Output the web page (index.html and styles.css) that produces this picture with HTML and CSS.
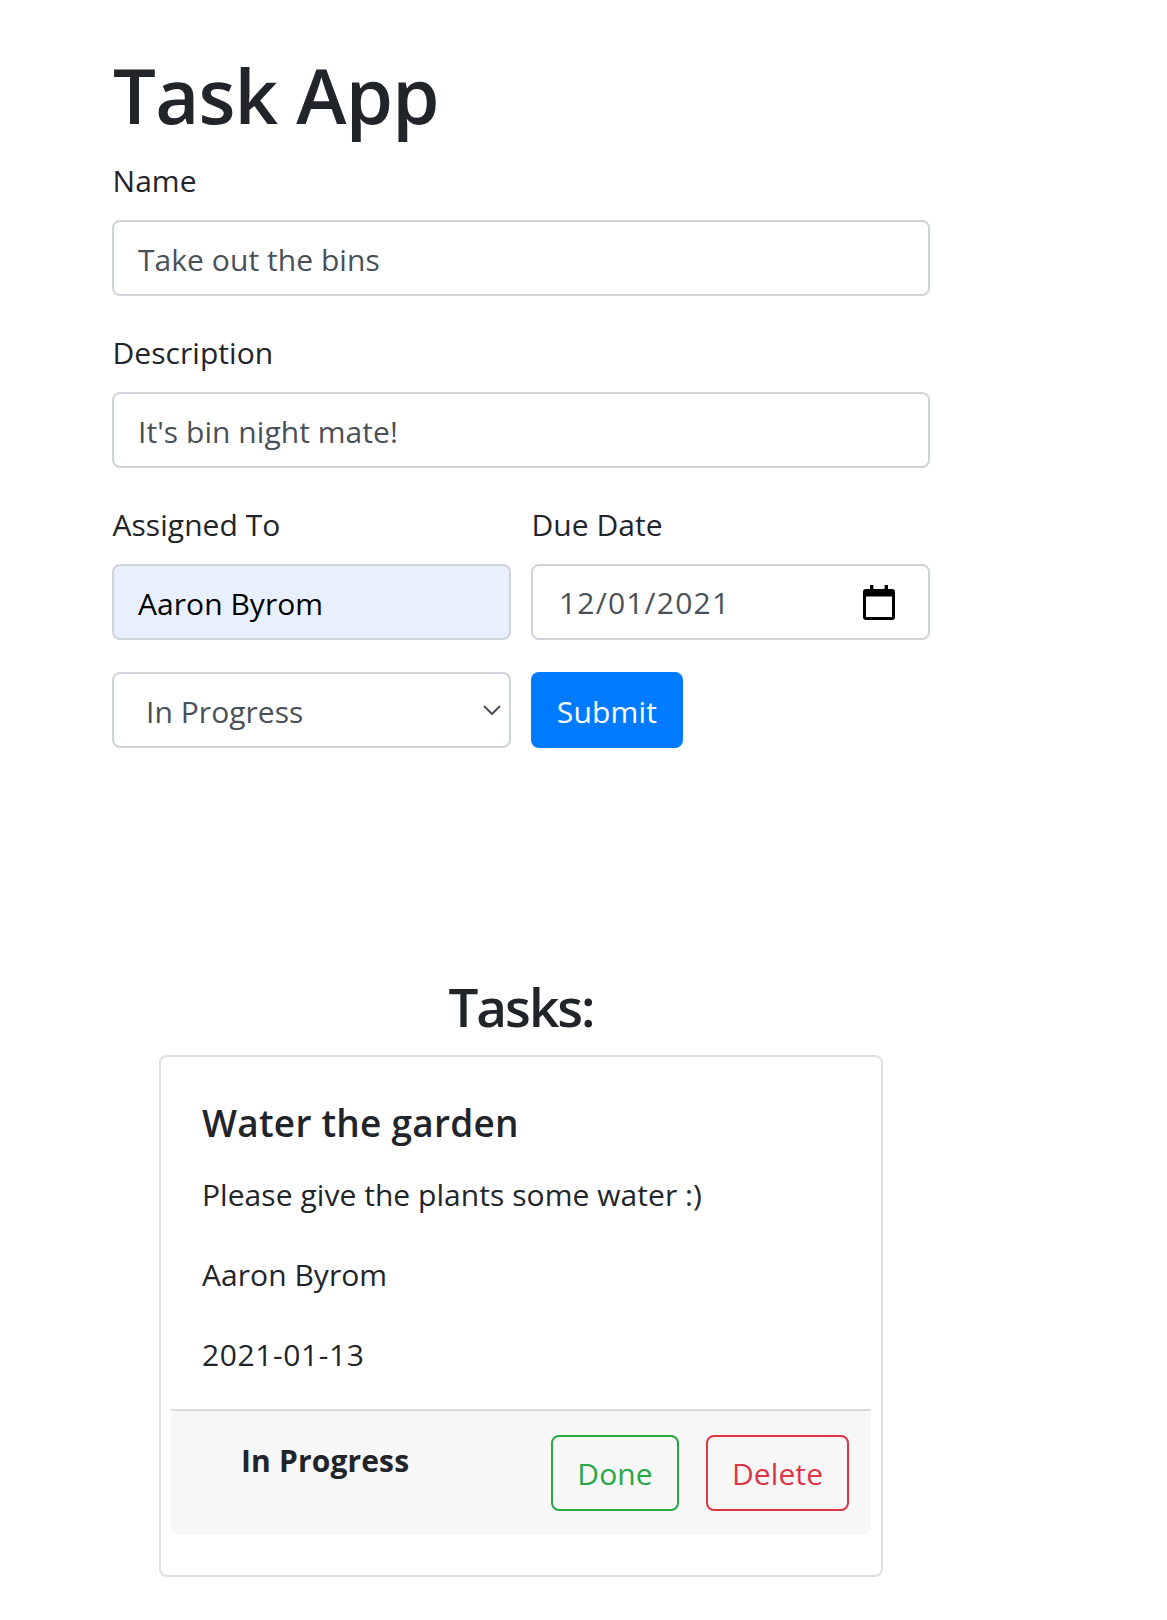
FILE: index.html
```html
<!DOCTYPE html>
<html lang="en">
<head>
<meta charset="utf-8">
<title>Task App</title>
<link rel="stylesheet" href="styles.css">
</head>
<body>
<main class="page">
  <h1 class="title">Task App</h1>
  <form class="task-form">
    <div class="group">
      <label class="label" for="name">Name</label>
      <input class="control" id="name" type="text" value="Take out the bins">
    </div>
    <div class="group">
      <label class="label" for="desc">Description</label>
      <input class="control" id="desc" type="text" value="It's bin night mate!">
    </div>
    <div class="row">
      <div class="col">
        <label class="label" for="who">Assigned To</label>
        <input class="control control-filled" id="who" type="text" value="Aaron Byrom">
      </div>
      <div class="col">
        <label class="label" for="due">Due Date</label>
        <div class="control date-field">
          <input class="date-input" id="due" type="text" value="12/01/2021">
          <svg class="calendar" viewBox="0 0 32 35" aria-hidden="true">
            <path d="M7 0h3.4v4H21.6V0H25v4h4a3 3 0 0 1 3 3v25a3 3 0 0 1-3 3H3a3 3 0 0 1-3-3V7a3 3 0 0 1 3-3h4zM3 11.500V32h26V11.500z"/>
          </svg>
        </div>
      </div>
    </div>
    <div class="row row-last">
      <div class="col select-wrap">
        <select class="control select">
          <option>In Progress</option>
          <option>Done</option>
        </select>
        <svg class="chevron" viewBox="0 0 18 10" aria-hidden="true">
          <path d="M1 1l8 8 8-8"/>
        </svg>
      </div>
      <div class="col">
        <button class="submit" type="button">Submit</button>
      </div>
    </div>
  </form>

  <section class="tasks">
    <h3 class="tasks-title">Tasks:</h3>
    <article class="card">
      <div class="card-body">
        <h5 class="card-title">Water the garden</h5>
        <p class="card-text">Please give the plants some water :)</p>
        <p class="card-text">Aaron Byrom</p>
        <p class="card-text card-date">2021-01-13</p>
      </div>
      <div class="card-footer">
        <strong class="status">In Progress</strong>
        <button class="btn btn-done" type="button">Done</button>
        <button class="btn btn-delete" type="button">Delete</button>
      </div>
    </article>
  </section>
</main>
</body>
</html>
```
FILE: styles.css
```css
* { box-sizing: border-box; }

html, body { margin: 0; background: #fff; }

body {
  font-family: "Open Sans", "Noto Sans", sans-serif;
  font-size: 30px;
  letter-spacing: 0.05px;
  line-height: 48px;
  color: #212529;
}

.page {
  width: 930px;
  padding: 47px 0 0 112px;
}

.title {
  margin: 0 0 13px;
  padding-left: 1px;
  font-size: 76px;
  font-weight: 600;
  line-height: 96px;
  letter-spacing: -0.8px;
}

.group { margin-bottom: 32px; }

.label {
  display: block;
  height: 48px;
  margin-bottom: 16px;
  padding: 1px 0 0 0.5px;
}

.control {
  display: block;
  width: 100%;
  height: 76px;
  padding: 3px 24px 0;
  border: 2px solid #ced4da;
  border-radius: 8px;
  background: #fff;
  color: #495057;
  font: inherit;
  letter-spacing: inherit;
}

.control-filled {
  background: #e8f0fe;
  color: #000;
}

.row {
  display: flex;
  gap: 20px;
  margin-bottom: 32px;
}

.row-last { margin-bottom: 0; }

.col {
  flex: 1 1 0;
  min-width: 0;
}

.date-field {
  display: flex;
  align-items: center;
  padding: 0 33px 0 26px;
}

.date-input {
  flex: 1;
  min-width: 0;
  padding: 2px 0 0;
  border: 0;
  background: none;
  color: #495057;
  font: inherit;
  letter-spacing: 1.2px;
}

.calendar {
  flex: none;
  width: 32px;
  height: 35px;
  fill: #000;
}

.select-wrap { position: relative; }

.select {
  padding-top: 4px;
  padding-left: 32px;
  appearance: none;
}

.chevron {
  position: absolute;
  top: 33px;
  right: 10px;
  width: 18px;
  height: 10px;
  fill: none;
  stroke: #495057;
  stroke-width: 2;
}

.submit {
  display: block;
  width: 152px;
  height: 76px;
  padding: 3px 0 0;
  border: 0;
  border-radius: 8px;
  background: #007bff;
  color: #fff;
  font: inherit;
  letter-spacing: 0.2px;
}

.tasks { margin-top: 225px; }

.tasks-title {
  margin: 1px 0 15px;
  font-size: 53px;
  font-weight: 600;
  line-height: 67px;
  letter-spacing: -2px;
  text-align: center;
}

.card {
  height: 522px;
  margin: 0 47px;
  padding: 10px;
  border: 2px solid #dedede;
  border-radius: 8px;
}

.card-body {
  height: 342px;
  padding: 32px 31px 0;
}

.card-title {
  margin: 0 0 24px;
  font-size: 37px;
  font-weight: 600;
  line-height: 48px;
  letter-spacing: 0.25px;
}

.card-text { margin: 0 0 32px; }

.card-date { letter-spacing: 0.6px; }

.card-footer {
  display: flex;
  align-items: flex-start;
  gap: 27px;
  height: 126px;
  padding: 24px 22px 0 70px;
  border-top: 2px solid #d9d9d9;
  border-radius: 0 0 8px 8px;
  background: #f7f7f7;
}

.status {
  margin: 2px auto 0 0;
  font-weight: 700;
  letter-spacing: 0.15px;
}

.btn {
  height: 76px;
  padding: 1px 0 0;
  background: none;
  border: 2px solid;
  border-radius: 8px;
  font: inherit;
  letter-spacing: 0.1px;
}

.btn-done { width: 128px; color: #28a745; border-color: #28a745; }
.btn-delete { width: 143px; color: #dc3545; border-color: #dc3545; }
```
